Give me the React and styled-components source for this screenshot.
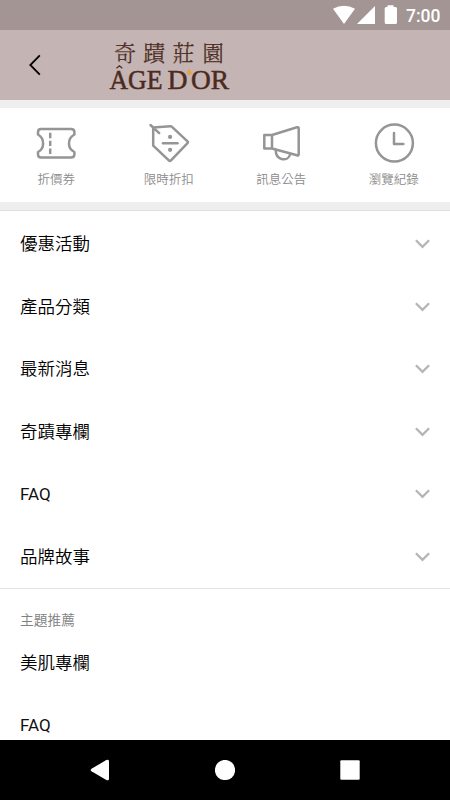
import React from 'react';
import styled, { createGlobalStyle } from 'styled-components';

const GlobalStyle = createGlobalStyle`
  * { box-sizing: border-box; }
  body { margin: 0; overflow: hidden; background: #fff; }
  svg { display: block; }
`;

const Screen = styled.div`
  width: 450px;
  height: 800px;
  display: flex;
  flex-direction: column;
  overflow: hidden;
  background: #fff;
  color: #000;
  font-family: Roboto, 'Noto Sans CJK TC', sans-serif;
`;

const StatusBar = styled.div`
  flex: none;
  height: 30px;
  padding-right: 9px;
  display: flex;
  justify-content: flex-end;
  background: #a39594;
  color: #fff;
`;

const Clock = styled.time`
  width: 35px;
  margin-left: 8px;
  font-size: 17.5px;
  font-weight: 500;
  line-height: 32px;
  white-space: nowrap;
`;

const Header = styled.header`
  flex: none;
  height: 70px;
  display: flex;
  background: #c4b4b3;
`;

const BackButton = styled.button`
  width: 70px;
  height: 70px;
  padding: 0;
  border: 0;
  background: none;
`;

const Brand = styled.svg`
  margin-left: 30px;
`;

const BrandChinese = styled.text`
  font-family: 'Noto Serif CJK TC', 'Noto Sans CJK TC', serif;
  font-weight: 300;
  font-size: 22px;
  fill: #4b2a20;
  stroke: #4b2a20;
  stroke-width: 0.25px;
`;

const BrandLatin = styled.text`
  font-family: 'Liberation Serif', serif;
  font-size: 26.5px;
  fill: #4b2a20;
  stroke: #4b2a20;
  stroke-width: 0.5px;
`;

const Content = styled.main`
  flex: 1;
  min-height: 0;
  overflow: hidden;
  background: #fff;
`;

const Shortcuts = styled.nav`
  height: 110px;
  display: grid;
  grid-template-columns: repeat(4, 1fr);
  border-top: 8px solid #eee;
  border-bottom: 8px solid #eee;
`;

const Shortcut = styled.div`
  display: flex;
  flex-direction: column;
  align-items: center;
  padding-top: 13px;
  color: #8c8c8c;
  font-size: 12.5px;
  font-weight: 350;
  line-height: 18px;
`;

const ShortcutIcon = styled.svg`
  width: 44px;
  height: 44px;
  margin-bottom: 6px;
  fill: none;
  stroke: #959595;
  stroke-width: 2.5;
  stroke-linecap: round;
  stroke-linejoin: round;
`;

const Menu = styled.ul`
  list-style: none;
  margin: 0;
  padding: ${p => (p.$divided ? '2px 0 0' : '0')};
  border-top: ${p => (p.$divided ? '1px solid #e0e0e0' : '0')};
`;

const MenuItem = styled.li`
  height: 62.5px;
  padding: 0 20px;
  display: flex;
  align-items: center;
  justify-content: space-between;
  line-height: 26px;
`;

const MenuLabel = styled.span`
  font-size: ${p => (p.$latin ? '17px' : '17.5px')};
  font-weight: ${p => (p.$latin ? 400 : 350)};
  color: ${p => (p.$latin ? '#111' : '#000')};
`;

const Section = styled.section`
  border-top: 1.5px solid #e4e4e4;
`;

const SectionTitle = styled.h2`
  margin: 0;
  padding: 21px 20px 0;
  height: 42.5px;
  color: #808080;
  font-size: 13.75px;
  font-weight: 350;
  line-height: 20px;
`;

const NavigationBar = styled.footer`
  flex: none;
  height: 60px;
  padding: 0 37.5px;
  display: grid;
  grid-template-columns: repeat(3, 1fr);
  place-items: center;
  background: #000;
`;

const Chevron = () => (
  <svg width="15" height="10" viewBox="0 0 15 10" fill="none" stroke="#b5b5b5" strokeWidth="2.3">
    <path d="M.9 1.3 7.5 7.9 14.1 1.3" />
  </svg>
);

const shortcuts = [
  ['折價券', <>
    <path d="M7 8H37Q40.4 8 40.4 11V13.5C33.2 17.5 33.2 27.5 40.4 31V33.5Q40.4 36.5 37 36.5H7Q4 36.5 4 33.5V31C10.8 27.5 10.8 17.5 4 13.5V11Q4 8 7 8Z" />
    <path d="M16.2 11.8v5.4m0 2.5v5.4m0 2.5v5.4" strokeLinecap="butt" />
  </>],
  ['限時折扣', <>
    <path d="M3.5 4 12.2 12.2M6.2 6.4 23.2 5.2Q24.3 5.1 25 5.8L40.5 20.3Q41.4 21.2 40.5 22.1L24 39.4Q22.9 40.5 21.8 39.4L6.2 24.7Z" />
    <path d="M16 22.2h14.5" />
    <circle cx="23.1" cy="15.9" r="2.1" fill="#959595" stroke="none" />
    <circle cx="23.1" cy="28.8" r="2.1" fill="#959595" stroke="none" />
  </>],
  ['訊息公告', <>
    <path d="M5.3 14H13L38 6.3Q39.7 5.8 39.7 7.4V33.2Q39.7 35 38 34.3L13 27.5H5.3ZM13 14V27.5" />
    <path d="M16.7 29C16.7 40 29.2 41 31.2 33.2" />
  </>],
  ['瀏覽紀錄', <>
    <circle cx="22.4" cy="22.1" r="18.5" />
    <path d="M22 12V23H31.3" />
  </>],
];

const categories = ['優惠活動', '產品分類', '最新消息', '奇蹟專欄', 'FAQ', '品牌故事'];
const recommended = ['美肌專欄', 'FAQ'];

export default function App() {
  return (
    <>
      <GlobalStyle />
      <Screen>
        <StatusBar>
          <svg width="65" height="30" viewBox="0 0 65 30" fill="currentColor">
            <path d="M0 8.8Q11 2.6 22 8.8L11 24ZM42 6V24H24ZM54.5 5.2h6v1.9h2Q64 7.1 64 8.6v13.8q0 1.6-1.6 1.6h-9.2q-1.5 0-1.5-1.6V8.6q0-1.5 1.5-1.5h1.3Z" />
          </svg>
          <Clock>7:00</Clock>
        </StatusBar>
        <Header>
          <BackButton aria-label="返回">
            <svg width="70" height="70" viewBox="0 0 70 70" fill="none" stroke="#000" strokeWidth="1.8">
              <path d="M39.8 25.3 30.3 35 39.8 44.7" />
            </svg>
          </BackButton>
          <Brand width="140" height="70" viewBox="0 0 140 70">
            <BrandChinese x="14 43.2 72.5 102" y="31">奇蹟莊園</BrandChinese>
            <BrandLatin x="9.5" y="58.6" textLength="53" lengthAdjust="spacingAndGlyphs">AGE</BrandLatin>
            <path d="M16.5 38.2 19.4 35.8 22.3 38.2" fill="none" stroke="#4b2a20" strokeWidth="1.2" />
            <BrandLatin x="67.5" y="58.6" textLength="20" lengthAdjust="spacingAndGlyphs">D</BrandLatin>
            <BrandLatin x="91" y="58.6" textLength="38" lengthAdjust="spacingAndGlyphs">OR</BrandLatin>
            <path d="M88.7 38C88.7 40.5 86.6 42 87 43.6C87.6 46 91.8 45.8 91.8 42.8C91.8 41 89.3 40 88.7 38Z" fill="#e2a349" />
          </Brand>
        </Header>
        <Content>
          <Shortcuts>
            {shortcuts.map(([label, drawing]) => (
              <Shortcut key={label}>
                <ShortcutIcon viewBox="0 0 44 44">{drawing}</ShortcutIcon>
                {label}
              </Shortcut>
            ))}
          </Shortcuts>
          <Menu $divided>
            {categories.map(label => (
              <MenuItem key={label}><MenuLabel $latin={label === 'FAQ'}>{label}</MenuLabel><Chevron /></MenuItem>
            ))}
          </Menu>
          <Section>
            <SectionTitle>主題推薦</SectionTitle>
            <Menu>
              {recommended.map(label => <MenuItem key={label}><MenuLabel $latin={label === 'FAQ'}>{label}</MenuLabel></MenuItem>)}
            </Menu>
          </Section>
        </Content>
        <NavigationBar>
          <svg width="20" height="22" viewBox="0 0 20 22" fill="#fff"><path d="M1.5 9.7 16.3 1.1Q19 0 19 2.3V19.7Q19 22 16.3 20.9L1.5 12.3Q-.1 11 1.5 9.7Z" /></svg>
          <svg width="20" height="20" viewBox="0 0 20 20" fill="#fff"><circle cx="10" cy="10" r="10.1" /></svg>
          <svg width="20" height="20" viewBox="0 0 20 20" fill="#fff"><rect x=".3" y=".3" width="19.4" height="19.4" rx="1" /></svg>
        </NavigationBar>
      </Screen>
    </>
  );
}
